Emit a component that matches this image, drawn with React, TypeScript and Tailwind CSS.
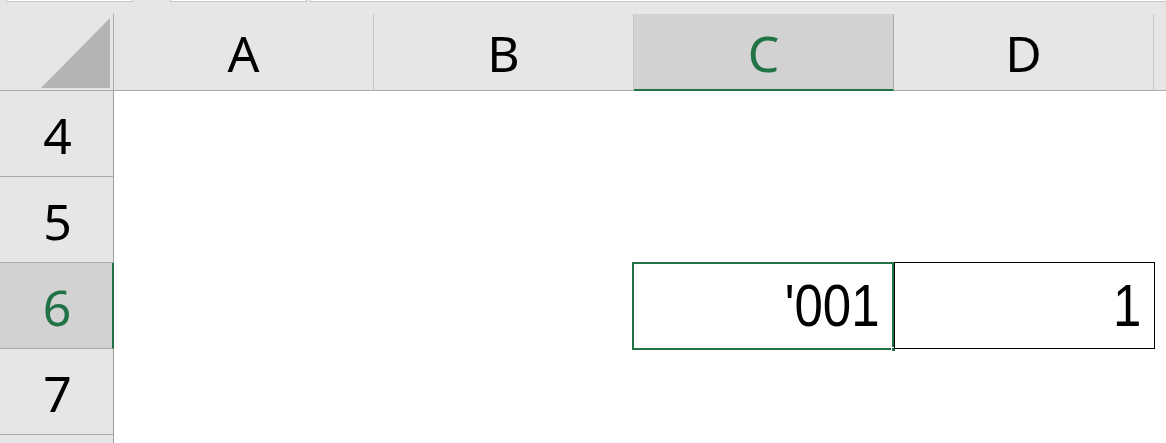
import React from 'react';

const COLS = ['A', 'B', 'C', 'D'];
const ROWS = [4, 5, 6, 7, 8];

const Corner = () => (
  <div className="w-[114px] shrink-0 border-r border-b border-[#ababab] flex items-end justify-end pr-[3px] pb-[2px]">
    <svg width="69" height="70" viewBox="0 0 69 70">
      <polygon points="69,0 69,70 0,70" fill="#b4b4b4" />
    </svg>
  </div>
);

const ColHeader = ({ label, active }: { label: string; active?: boolean }) => (
  <div
    className={
      active
        ? 'w-[260px] shrink-0 bg-[#d2d2d2] border-r border-[#ababab] border-b-2 border-b-[#217346] flex items-center justify-center text-[#217346]'
        : 'w-[260px] shrink-0 border-r border-[#c6c6c6] border-b border-b-[#ababab] flex items-center justify-center text-black'
    }
  >
    <span className="text-[50px] leading-none pt-[2px]">{label}</span>
  </div>
);

export default function App() {
  return (
    <div
      className="w-[1166px] h-[443px] overflow-hidden bg-white"
      style={{ fontFamily: '"Noto Sans", "Open Sans", sans-serif' }}
    >
      {/* tab strip remnant */}
      <div className="h-[14px] bg-[#e6e6e6] flex items-start">
        <div className="ml-[6px] w-[127px] h-[2px] bg-white border-x border-b border-[#c6c6c6]" />
        <div className="ml-[37px] w-[137px] h-[2px] bg-white border-x border-b border-[#c6c6c6]" />
        <div className="ml-[3px] flex-1 h-[2px] bg-white border-l border-b border-[#c6c6c6]" />
      </div>

      {/* column headers */}
      <div className="flex h-[77px] bg-[#e6e6e6]">
        <Corner />
        {COLS.map((c) => (
          <ColHeader key={c} label={c} active={c === 'C'} />
        ))}
        <div className="flex-1 border-b border-[#ababab]" />
      </div>

      {/* rows */}
      {ROWS.map((r) => {
        const active = r === 6;
        return (
          <div key={r} className="flex h-[86px]">
            <div
              className={
                active
                  ? 'w-[114px] shrink-0 bg-[#d2d2d2] border-r-2 border-[#217346] border-b border-b-[#ababab] flex items-center justify-center text-[#217346]'
                  : 'w-[114px] shrink-0 bg-[#e6e6e6] border-r border-[#9e9e9e] border-b border-b-[#ababab] flex items-center justify-center text-black'
              }
            >
              {r < 8 && <span className="text-[50px] leading-none pt-[2px] pl-[2px]">{r}</span>}
            </div>
            {active ? (
              <div className="flex flex-1" style={{ fontFamily: '"Liberation Sans", Arial, sans-serif' }}>
                <div className="w-[260px] shrink-0" />
                <div className="w-[260px] shrink-0" />
                <div className="w-[260px] shrink-0 relative flex items-center justify-end pr-[14px]">
                  <div className="absolute -left-[2px] -top-px w-[262px] h-[88px] border-2 border-[#217346]">
                    <div className="absolute -right-[4px] -bottom-[4px] w-[5px] h-[5px] bg-[#217346] border border-white" />
                  </div>
                  <span className="inline-block origin-right scale-x-[0.85] text-[60px] leading-none text-black">'001</span>
                </div>
                <div className="w-[260px] shrink-0 relative flex items-center justify-end pr-[13px]">
                  <div className="absolute left-0 -top-px w-[261px] h-[87px] border border-black" />
                  <span className="inline-block origin-right scale-x-[0.85] text-[60px] leading-none text-black">1</span>
                </div>
              </div>
            ) : (
              <div className="flex-1" />
            )}
          </div>
        );
      })}
    </div>
  );
}
